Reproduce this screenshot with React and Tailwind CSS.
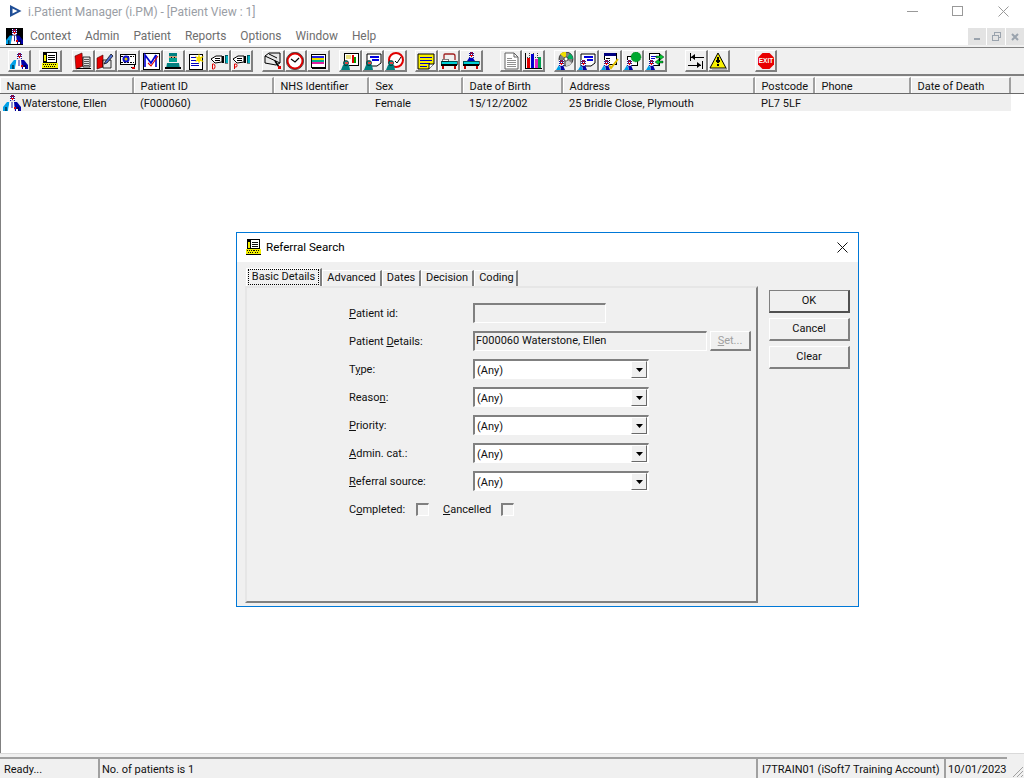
import React from "react";

const c = "[shape-rendering:crispEdges]";
const Svg = ({ children, s = 18 }) => (
  <svg width={s} height={s} viewBox="0 0 18 18" className="block">{children}</svg>
);
const Head = ({ x = 0, y = 0 }) => (
  <g transform={`translate(${x} ${y})`} className={c}>
    <rect x="0" y="0" width="5" height="6" fill="#1a1a9a" />
    <rect x="0" y="0" width="1" height="1" fill="#fff" /><rect x="2" y="0" width="1" height="1" fill="#e00000" /><rect x="4" y="0" width="1" height="1" fill="#fff" />
    <rect x="1" y="1" width="1" height="1" fill="#e00000" /><rect x="3" y="1" width="1" height="1" fill="#e00000" />
    <rect x="0" y="2" width="1" height="1" fill="#fff" /><rect x="2" y="2" width="1" height="1" fill="#fff" /><rect x="4" y="2" width="1" height="1" fill="#fff" />
    <rect x="1" y="3" width="3" height="1" fill="#e00000" />
    <rect x="0" y="4" width="5" height="1" fill="#fff" /><rect x="2" y="4" width="1" height="1" fill="#e00000" />
    <rect x="1" y="5" width="3" height="1" fill="#c8c8e8" />
  </g>
);
const Person = () => (
  <g>
    <path d="M0 17 L0 13 L4 8 L6.5 8 L5 17 Z" fill="#00a0e8" />
    <path d="M5 17 L6.5 8 L11 8 L12 17 Z" fill="#fff" />
    <path d="M11 8 L14 8 L18 13 L18 17 L12 17 Z" fill="#0000a8" />
    <path d="M8.5 8 L9.5 8 L9.5 14 L8.5 14 Z" fill="#1a1a9a" />
    <path d="M3 17 L3 13 M15 17 L15 13" stroke="#000" />
    <rect x="11" y="13" width="2" height="2" fill="#e00000" className={c} />
    <rect x="13" y="15" width="2" height="2" fill="#fff" className={c} />
    <Head x="6.5" y="1" />
  </g>
);
const SmallPerson = () => (
  <g>
    <path d="M0 18 L2 13 L8 13 L9 18 Z" fill="#008080" />
    <circle cx="5" cy="11" r="2.6" fill="#00807a" stroke="#000" strokeWidth="0.5" />
    <rect x="3.5" y="9.5" width="3" height="2.5" fill="#e04040" className={c} />
  </g>
);
const BluePerson = () => (
  <g>
    <path d="M0 18 L3 13 L5 18 Z" fill="#00a0e8" />
    <path d="M4 13 L7 13 L9 18 L5 18 Z" fill="#0000a8" />
    <Head x="3" y="8" />
  </g>
);

const referralArt = (
  <g>
    <rect x="2" y="0" width="14" height="12" fill="#000" className={c} />
    <rect x="6" y="1" width="9" height="9" fill="#fff" className={c} />
    <rect x="3" y="3" width="2" height="6" fill="#f4f000" className={c} />
    <path d="M7 3.5H14M7 5.5H14M7 7.5H14" stroke="#000" className={c} />
    <rect x="1" y="11" width="16" height="6" fill="#f4f000" className={c} />
    <rect x="1" y="16" width="16" height="1" fill="#000" className={c} />
    <path d="M2 12.5H16M3 14.5H15" stroke="#000" strokeDasharray="1 1" className={c} />
  </g>
);

const icons = {
  patient: <Svg><Person /></Svg>,
  referral: <Svg>{referralArt}</Svg>,
  book: (
    <Svg>
      <path d="M1 4 L8 1 L9 14 L2 17 Z" fill="#e80000" stroke="#400" strokeWidth="0.6" />
      <path d="M9 5 L16 5 L16 15 L9 15 Z" fill="#e0e0e0" stroke="#000" strokeWidth="0.8" />
      <path d="M10 7H15M10 9H15M10 11H15M10 13H15" stroke="#555" className={c} />
      <rect x="3" y="16" width="14" height="1" fill="#000" className={c} />
    </Svg>
  ),
  bookPen: (
    <Svg>
      <path d="M1 6 L7 3 L7 15 L1 17 Z" fill="#e80000" stroke="#400" strokeWidth="0.6" />
      <path d="M7 8 L15 8 L15 16 L7 16 Z" fill="#e6e6e6" stroke="#000" strokeWidth="0.8" />
      <path d="M9 10 L15 2 L17 4 L11 11 L8 12 Z" fill="#5070d0" stroke="#000" strokeWidth="0.7" />
    </Svg>
  ),
  globeDoc: (
    <Svg>
      <rect x="1" y="2" width="15" height="10" fill="#fff" stroke="#000" className={c} />
      <path d="M2 4H15M2 10H15" stroke="#000" strokeDasharray="2 1" className={c} />
      <circle cx="7" cy="7" r="3.5" fill="#1010d0" />
      <circle cx="7" cy="7" r="1.5" fill="#e0d000" />
      <path d="M11 12H15V15H12" fill="none" stroke="#000" className={c} />
      <rect x="13" y="15" width="3" height="2" fill="#e00000" className={c} />
    </Svg>
  ),
  mMail: (
    <Svg>
      <rect x="1" y="1" width="16" height="16" fill="#fff" stroke="#000" className={c} />
      <path d="M3 15 L3 3 L9 11 L14 3" fill="none" stroke="#0000d0" strokeWidth="1.6" />
      <path d="M14 3 L14 15" stroke="#0000d0" strokeWidth="1.6" />
      <path d="M6 11 L9 14 L16 4" fill="none" stroke="#e00000" strokeWidth="1.1" />
    </Svg>
  ),
  surgeon: (
    <Svg>
      <rect x="5" y="1" width="8" height="3" fill="#008080" className={c} />
      <rect x="5" y="4" width="8" height="3" fill="#c8a080" className={c} />
      <rect x="5" y="6" width="8" height="4" fill="#00a090" className={c} />
      <rect x="7" y="5" width="1" height="1" fill="#000" className={c} />
      <rect x="10" y="5" width="1" height="1" fill="#000" className={c} />
      <path d="M2 17 L3 11 L15 11 L16 17 Z" fill="#008080" />
      <rect x="1" y="15" width="16" height="2" fill="#000" className={c} />
    </Svg>
  ),
  star: (
    <Svg>
      <rect x="2" y="2" width="13" height="15" fill="#fff" stroke="#000" className={c} />
      <path d="M4 5H9M4 8H9M4 11H12M4 13H12" stroke="#0000c0" className={c} />
      <path d="M12 1 L13 5 L17 4 L14 7 L17 10 L13 9 L12 12 L11 9 L8 10 L10 7 L8 4 L11 5 Z" fill="#f8e000" />
    </Svg>
  ),
  handD: (
    <Svg>
      <path d="M1 7 L6 4 L12 4 L12 10 L5 11 Z" fill="#fff" stroke="#000" />
      <path d="M5 6H10M5 8H10" stroke="#000" className={c} />
      <rect x="12" y="4" width="2" height="7" fill="#000" className={c} />
      <rect x="15" y="3" width="3" height="8" fill="#00b0c0" stroke="#000" strokeWidth="0.5" className={c} />
      <path d="M2.5 12 V17 H3.5 Q5 17 5 14.5 Q5 12 3.5 12 Z" fill="none" stroke="#e00000" strokeWidth="1" />
    </Svg>
  ),
  handP: (
    <Svg>
      <path d="M1 7 L6 4 L12 4 L12 10 L5 11 Z" fill="#fff" stroke="#000" />
      <path d="M5 6H10M5 8H10" stroke="#000" className={c} />
      <rect x="12" y="4" width="2" height="7" fill="#000" className={c} />
      <rect x="15" y="3" width="3" height="8" fill="#00b0c0" stroke="#000" strokeWidth="0.5" className={c} />
      <path d="M2.5 17 V12 H4 Q5 12 5 13.5 Q5 15 4 15 H2.5" fill="none" stroke="#e00000" strokeWidth="1" />
    </Svg>
  ),
  envelope: (
    <Svg>
      <path d="M1 4 L5 1 L16 1 L16 11 L12 13 L1 11 Z" fill="#e8e8e8" stroke="#000" />
      <path d="M1 4 L16 11 M5 2 L13 6" stroke="#000" />
      <path d="M11 9 L15 15" stroke="#000" strokeWidth="1.5" />
      <rect x="14" y="14" width="3" height="3" fill="#e00000" className={c} />
    </Svg>
  ),
  clock: (
    <Svg>
      <circle cx="9" cy="9" r="7.5" fill="#fff" stroke="#e00000" strokeWidth="2" />
      <circle cx="9" cy="9" r="8.7" fill="none" stroke="#000" strokeWidth="0.6" />
      <path d="M5 7 L9 10 L13 6" fill="none" stroke="#000" strokeWidth="1.2" />
    </Svg>
  ),
  list: (
    <Svg>
      <rect x="2" y="2" width="14" height="13" fill="#fff" stroke="#000" className={c} />
      <rect x="3" y="4" width="12" height="2" fill="#2020e0" className={c} />
      <rect x="3" y="6" width="12" height="2" fill="#f0e000" className={c} />
      <rect x="3" y="8" width="12" height="2" fill="#00b090" className={c} />
      <rect x="3" y="10" width="12" height="2" fill="#e020a0" className={c} />
      <rect x="3" y="15" width="14" height="2" fill="#000" className={c} />
    </Svg>
  ),
  chartP: (
    <Svg>
      <rect x="3" y="1" width="14" height="12" fill="#fff" stroke="#000" className={c} />
      <rect x="11" y="3" width="2" height="8" fill="#e00000" className={c} />
      <rect x="13" y="5" width="2" height="6" fill="#00a000" className={c} />
      <rect x="5" y="3" width="5" height="4" fill="#e8e080" className={c} />
      <SmallPerson />
    </Svg>
  ),
  listP: (
    <Svg>
      <path d="M3 2 H17 V11 L13 14 H3 Z" fill="#fff" stroke="#000" />
      <path d="M6 5H15M8 8H15" stroke="#0000e0" strokeWidth="2" className={c} />
      <SmallPerson />
    </Svg>
  ),
  clockP: (
    <Svg>
      <circle cx="10" cy="8" r="7" fill="#fff" stroke="#e00000" strokeWidth="2" />
      <path d="M9 9 L11 11 L15 5" fill="none" stroke="#000" />
      <SmallPerson />
    </Svg>
  ),
  note: (
    <Svg>
      <path d="M1 2 H17 V12 L12 17 H1 Z" fill="#f8f000" stroke="#000" />
      <path d="M3 5H15M3 8H15M3 11H13M3 14H10" stroke="#0000c0" className={c} />
      <path d="M12 17 V12 H17" fill="#fff" stroke="#000" />
    </Svg>
  ),
  bed: (
    <Svg>
      <path d="M4 8 V3 Q4 2 5 2 H13 Q15 2 15 4 V8" fill="none" stroke="#a02020" strokeWidth="1.3" />
      <rect x="1" y="9" width="16" height="3" fill="#00d0d8" stroke="#000" strokeWidth="0.6" className={c} />
      <rect x="2" y="7" width="6" height="2" fill="#fff" stroke="#000" strokeWidth="0.5" className={c} />
      <rect x="1" y="12" width="16" height="2" fill="#000" className={c} />
      <rect x="2" y="14" width="2" height="3" fill="#c00000" className={c} />
      <rect x="14" y="14" width="2" height="3" fill="#c00000" className={c} />
    </Svg>
  ),
  bedP: (
    <Svg>
      <path d="M5 9 L9 3 L13 9 Z" fill="#0000c0" />
      <Head x="6.5" y="0" />
      <rect x="1" y="9" width="16" height="3" fill="#00d0d8" stroke="#000" strokeWidth="0.6" className={c} />
      <rect x="1" y="12" width="16" height="2" fill="#000" className={c} />
      <rect x="2" y="14" width="2" height="3" fill="#c00000" className={c} />
      <rect x="14" y="14" width="2" height="3" fill="#c00000" className={c} />
    </Svg>
  ),
  doc: (
    <Svg>
      <path d="M3 1 H12 L16 5 V17 H3 Z" fill="#fff" stroke="#606060" />
      <path d="M12 1 V5 H16" fill="none" stroke="#606060" />
      <path d="M5 6H10M5 8H14M5 10H14M5 12H14M5 14H14" stroke="#909090" className={c} />
    </Svg>
  ),
  bars: (
    <Svg>
      <path d="M1 5H17M1 9H17M5 1V16M9 1V16M13 1V16" stroke="#444" strokeDasharray="1 1" fill="none" className={c} />
      <path d="M1 1 V16 H18" stroke="#000" fill="none" className={c} />
      <rect x="3" y="6" width="3" height="10" fill="#e00000" className={c} />
      <rect x="7" y="2" width="3" height="14" fill="#0000d0" className={c} />
      <rect x="11" y="7" width="3" height="9" fill="#e020c0" className={c} />
      <rect x="14" y="5" width="3" height="11" fill="#00a050" className={c} />
    </Svg>
  ),
  cdP: (
    <Svg>
      <circle cx="10" cy="7" r="7" fill="#808080" stroke="#000" strokeWidth="0.7" />
      <path d="M10 7 L4 2 A7 7 0 0 1 10 0 Z" fill="#f0e000" />
      <path d="M10 7 L17 7 A7 7 0 0 0 14 1.5 Z" fill="#00b060" />
      <path d="M10 7 L16 11 A7 7 0 0 1 10 14 Z" fill="#d0d0d0" />
      <circle cx="10" cy="7" r="2" fill="#fff" stroke="#000" strokeWidth="0.6" />
      <BluePerson />
    </Svg>
  ),
  listB: (
    <Svg>
      <path d="M3 2 H17 V11 L13 14 H3 Z" fill="#fff" stroke="#000" />
      <path d="M6 5H15M9 8H15" stroke="#0000e0" strokeWidth="2" className={c} />
      <BluePerson />
    </Svg>
  ),
  calB: (
    <Svg>
      <rect x="3" y="1" width="12" height="11" fill="#fff" stroke="#000" className={c} />
      <rect x="3" y="1" width="12" height="3" fill="#000080" className={c} />
      <path d="M5 6H9M5 8H9M5 10H9" stroke="#000" className={c} />
      <path d="M8 13 L10 16 L17 7" fill="none" stroke="#e0c000" strokeWidth="2" />
      <BluePerson />
    </Svg>
  ),
  blobB: (
    <Svg>
      <rect x="3" y="4" width="10" height="9" fill="#fff" stroke="#000" className={c} />
      <circle cx="12" cy="5" r="5" fill="#00a830" stroke="#006000" strokeWidth="0.6" strokeDasharray="1 1" />
      <BluePerson />
    </Svg>
  ),
  arrowsB: (
    <Svg>
      <rect x="3" y="1" width="10" height="12" fill="#fff" stroke="#000" className={c} />
      <path d="M5 4H10M5 6H9" stroke="#0000d0" className={c} />
      <path d="M10 4 H14 V2 L18 5 L14 8 V6 H10 Z" fill="#00c830" stroke="#000" strokeWidth="0.4" />
      <path d="M17 9 H13 V7 L9 10 L13 13 V11 H17 Z" fill="#00c830" stroke="#000" strokeWidth="0.4" />
      <BluePerson />
    </Svg>
  ),
  swap: (
    <Svg>
      <path d="M3 1 V9 M15 9 V17" stroke="#000" className={c} />
      <path d="M4 5 H17 M1 13 H14" stroke="#000" className={c} />
      <path d="M4 5 L8 2 V8 Z M14 13 L10 10 V16 Z" fill="#000" />
    </Svg>
  ),
  warn: (
    <Svg>
      <path d="M9 1 L17 16 H1 Z" fill="#f8f000" stroke="#000" />
      <rect x="8" y="5" width="2" height="6" fill="#000" className={c} />
      <rect x="7" y="8" width="4" height="2" fill="#000" className={c} />
      <rect x="8" y="12" width="2" height="2" fill="#000" className={c} />
      <path d="M17 16 L18 17 H3" stroke="#808080" fill="none" />
    </Svg>
  ),
  exit: (
    <Svg>
      <path d="M5.5 1 H12.5 L17 5.5 V12.5 L12.5 17 H5.5 L1 12.5 V5.5 Z" fill="#e80000" />
      <text x="9" y="11" textAnchor="middle" fontSize="6.5" fontWeight="700" fill="#fff" fontFamily="Liberation Sans, sans-serif">EXIT</text>
    </Svg>
  ),
};

const groups = [
  { ml: "ml-[8px]", items: ["patient"] },
  { ml: "ml-[8.33px]", items: ["referral"] },
  { ml: "ml-[10.33px]", items: ["book", "bookPen", "globeDoc", "mMail", "surgeon", "star", "handD", "handP"] },
  { ml: "ml-[8.64px]", items: ["envelope", "clock", "list"] },
  { ml: "ml-[9.33px]", items: ["chartP", "listP", "clockP"] },
  { ml: "ml-[8px]", items: ["note", "bed", "bedP"] },
  { ml: "ml-[16.67px]", items: ["doc", "bars"] },
  { ml: "ml-[8.67px]", items: ["cdP", "listB", "calB", "blobB", "arrowsB"] },
  { ml: "ml-[18px]", items: ["swap", "warn"] },
  { ml: "ml-[24.5px]", items: ["exit"] },
];

const columns = [
  { label: "Name", w: "w-[134px]", value: "Waterstone, Ellen" },
  { label: "Patient ID", w: "w-[140px]", value: "(F000060)" },
  { label: "NHS Identifier", w: "w-[95px]", value: "" },
  { label: "Sex", w: "w-[94px]", value: "Female" },
  { label: "Date of Birth", w: "w-[100px]", value: "15/12/2002" },
  { label: "Address", w: "w-[192px]", value: "25 Bridle Close, Plymouth" },
  { label: "Postcode", w: "w-[60px]", value: "PL7 5LF" },
  { label: "Phone", w: "w-[96px]", value: "" },
  { label: "Date of Death", w: "w-[100px]", value: "" },
];

const menus = ["Context", "Admin", "Patient", "Reports", "Options", "Window", "Help"];

const Sel = ({ children }) => (
  <div className="w-[176px] h-[20px] bg-white border-t-2 border-l-2 border-t-[#808080] border-l-[#808080] border-r border-b border-r-white border-b-white flex items-center justify-between box-border">
    <span className="pl-[2px] leading-none pt-px">{children}</span>
    <span className="w-[16px] h-[17px] mr-[1px] bg-[#f0f0f0] border-r border-b border-r-[#696969] border-b-[#696969] border-t border-l border-t-white border-l-white flex items-center justify-center box-border">
      <svg width="7" height="4" viewBox="0 0 7 4"><path d="M0 0H7L3.5 4Z" fill="#000" /></svg>
    </span>
  </div>
);

const FormRow = ({ label, children }) => (
  <div className="flex items-center h-[20px]">
    <div className="w-[124px] pt-[2px]">{label}</div>
    {children}
  </div>
);

const DlgBtn = ({ children, def }) => (
  <div
    className={
      "w-[81px] h-[23px] flex items-center justify-center bg-[#f0f0f0] border-t border-l box-border border-r-2 border-b-2 " +
      (def ? "border-t-[#808080] border-l-[#808080] border-r-[#505050] border-b-[#505050]" : "border-t-white border-l-white border-r-[#808080] border-b-[#808080]")
    }
  >
    <span className="pt-px">{children}</span>
  </div>
);

const Tab = ({ w, children }) => (
  <div className={w + " h-[16px] mt-[2px] flex items-center justify-center border-t border-l border-t-white border-l-white border-r-2 border-r-[#808080] box-border"}>
    {children}
  </div>
);

const Status = ({ w, pad = "pl-[3px]", children }) => (
  <div className={w + " h-[21px] flex items-center border-t-2 border-l-2 border-t-[#a0a0a0] border-l-[#a0a0a0] box-border whitespace-nowrap " + pad}>
    <span className="pt-[3px]">{children}</span>
  </div>
);

export default function App() {
  return (
    <div className="relative w-[1024px] h-[778px] overflow-hidden bg-white flex flex-col text-[11px] text-[#111] font-['Roboto',sans-serif]">
      {/* Title bar */}
      <div className="h-[22px] flex items-center shrink-0">
        <svg width="14" height="14" viewBox="0 0 14 14" className="ml-[9px] -mt-[1px]">
          <path d="M1 1 L12.5 7 L1 13 Z M3.5 4.5 V9.5 L8.5 7 Z" fill="#1f4e96" fillRule="evenodd" />
        </svg>
        <span className="ml-[5px] pt-px text-[12px] text-[#9a9ea5]">
          i.Patient Manager (i.PM) - [Patient View : 1]
        </span>
        <div className="ml-auto flex items-center">
          <span className="w-[11px] h-px bg-[#999]" />
          <span className="ml-[34px] w-[11px] h-[10px] border border-[#999]" />
          <svg className="ml-[35px] mr-[15px]" width="11" height="11" viewBox="0 0 11 11"><path d="M0.5 0.5 L10.5 10.5 M10.5 0.5 L0.5 10.5" stroke="#999" /></svg>
        </div>
      </div>

      {/* Menu bar */}
      <div className="h-[23px] flex shrink-0 text-[11.9px] text-[#6e6e6e]">
        <div className="ml-[6px] mt-[6px]"><Svg s={17}><rect width="18" height="18" fill="#000" /><Person /></Svg></div>
        <div className="flex gap-[14px] ml-[7px] pt-[6px]">
          {menus.map((m) => <span key={m} className="leading-[16px]">{m}</span>)}
        </div>
        <div className="ml-auto mt-[6px] flex gap-px">
          {[0, 1, 2].map((i) => (
            <div key={i} className="w-[18px] h-[17px] bg-[#e3e3e3] flex items-center justify-center">
              {i === 0 && <span className="w-[6px] h-[2px] mt-[5px] bg-[#9aa3ad]" />}
              {i === 1 && (
                <svg width="9" height="9" viewBox="0 0 9 9" className={c}><path d="M2.5 2.5V0.5H8.5V5.5H6.5M0.5 3.5H6.5V8.5H0.5Z" fill="none" stroke="#9aa3ad" /></svg>
              )}
              {i === 2 && (
                <svg width="8" height="8" viewBox="0 0 8 8"><path d="M1 1L7 7M7 1L1 7" stroke="#9aa3ad" strokeWidth="2" /></svg>
              )}
            </div>
          ))}
        </div>
      </div>

      {/* Toolbar */}
      <div className="h-[31px] shrink-0 bg-[#f0f0f0] pt-[2px] box-border">
        <div className="h-[29px] border-t border-t-[#808080] border-b-2 border-b-[#808080] flex items-center box-border">
          {groups.map((g, i) => (
            <div key={i} className={"flex " + g.ml}>
              {g.items.map((k) => (
                <div key={k} className="w-[22.67px] h-[22px] flex items-center justify-center bg-[#f0f0f0] border-t border-l border-t-white border-l-white border-r-2 border-b-2 border-r-[#808080] border-b-[#808080] box-border">
                  {icons[k]}
                </div>
              ))}
            </div>
          ))}
        </div>
      </div>

      {/* Patient list */}
      <div className="flex-1 min-h-0 border-l border-l-[#808080] bg-white">
        <div className="h-[18px] bg-[#f0f0f0] pt-px box-border -ml-px flex border-b border-b-[#696969]">
          {columns.map((col) => (
            <div key={col.label} className={col.w + " h-[16px] pl-[5.5px] flex items-center border-t border-l border-t-white border-l-white border-r-2 border-r-[#a0a0a0] box-border shrink-0 whitespace-nowrap"}>
              <span className="pt-[3px]">{col.label}</span>
            </div>
          ))}
        </div>
        <div className="w-[1011px] -ml-px h-[17px] bg-[#efefef] flex items-center">
          {columns.map((col, i) => (
            <div key={col.label} className={col.w + " h-full shrink-0 flex items-center whitespace-nowrap " + (i === 0 ? "pl-[3px]" : "pl-[6px]")}>
              {i === 0 && <Svg s={18}><Person /></Svg>}
              <span className={i === 0 ? "ml-px pt-[3px]" : "pt-[3px]"}>{col.value}</span>
            </div>
          ))}
        </div>
      </div>

      {/* Status bar */}
      <div className="h-[25px] shrink-0 bg-[#f0f0f0] border-t border-t-[#d9d9d9] flex items-end box-border relative">
        <div className="w-[98px] h-[21px] flex items-center pl-[4px] border-t-2 border-t-[#a0a0a0] box-border"><span className="pt-[3px]">Ready...</span></div>
        <Status w="w-[658px]" pad="pl-[2px]">No. of patients is 1</Status>
        <Status w="w-[188px]" pad="pl-[4px]">I7TRAIN01 (iSoft7 Training Account)</Status>
        <Status w="w-[63px]" pad="pl-[2px]">10/01/2023</Status>
        <svg className="absolute right-0 bottom-0" width="14" height="14" viewBox="0 0 14 14">
          <path d="M13 3L3 13M13 7L7 13M13 11L11 13" stroke="#a0a0a0" fill="none" />
        </svg>
      </div>

      {/* Dialog */}
      <div className="absolute left-[236px] top-[232px] w-[623px] h-[375px] border border-[#0078d7] bg-[#f0f0f0] flex flex-col box-border">
        <div className="h-[29px] bg-white flex items-center shrink-0">
          <div className="ml-[8px]"><Svg s={17}>{referralArt}</Svg></div>
          <span className="ml-[4px] text-[11.6px] text-black">Referral Search</span>
          <svg className="ml-auto mr-[10px]" width="11" height="11" viewBox="0 0 11 11"><path d="M0.5 0.5 L10.5 10.5 M10.5 0.5 L0.5 10.5" stroke="#111" /></svg>
        </div>
        <div className="flex pl-[8px] pt-[6px]">
          <div className="w-[513px]">
            <div className="flex h-[18px] pl-px">
              <div className="w-[76px] h-[18px] flex items-center justify-center border-t border-l border-t-white border-l-white border-r-2 border-r-[#808080] box-border">
                <span className="w-[71px] text-center h-[16px] -mt-px leading-[13px] border border-dotted border-black whitespace-nowrap">Basic Details</span>
              </div>
              <Tab w="w-[60px]">Advanced</Tab>
              <Tab w="w-[39px]">Dates</Tab>
              <Tab w="w-[53px]">Decision</Tab>
              <Tab w="w-[44px]"><span className="pl-[2px]">Coding</span></Tab>
            </div>
            <div className="h-[317px] border-t-2 border-l-2 border-t-[#e6e6e6] border-l-[#e6e6e6] border-r-2 border-b-2 border-r-[#808080] border-b-[#808080] box-border pl-[102px] pt-[15px] flex flex-col gap-[8px]">
              <FormRow label={<span><u>P</u>atient id:</span>}>
                <div className="w-[133px] h-[20px] border-t-2 border-l-2 border-t-[#808080] border-l-[#808080] border-r border-b border-r-white border-b-white box-border" />
              </FormRow>
              <FormRow label={<span>Patient <u>D</u>etails:</span>}>
                <div className="w-[234px] h-[20px] border-t-2 border-l-2 border-t-[#808080] border-l-[#808080] border-r border-b border-r-white border-b-white box-border flex items-center pl-[1px]">F000060 Waterstone, Ellen</div>
                <div className="ml-[3px] w-[41px] h-[20px] flex items-center justify-center text-[#a0a0a0] border-t border-l border-t-white border-l-white border-r-2 border-b-2 border-r-[#808080] border-b-[#808080] box-border"><span className="pt-px"><u>S</u>et...</span></div>
              </FormRow>
              <FormRow label={<span>T<u>y</u>pe:</span>}><Sel>(Any)</Sel></FormRow>
              <FormRow label={<span>Reaso<u>n</u>:</span>}><Sel>(Any)</Sel></FormRow>
              <FormRow label={<span><u>P</u>riority:</span>}><Sel>(Any)</Sel></FormRow>
              <FormRow label={<span><u>A</u>dmin. cat.:</span>}><Sel>(Any)</Sel></FormRow>
              <FormRow label={<span><u>R</u>eferral source:</span>}><Sel>(Any)</Sel></FormRow>
              <div className="flex items-center h-[20px]">
                <span className="w-[67px] pt-[2px]">C<u>o</u>mpleted:</span>
                <span className="w-[13px] h-[13px] bg-[#f4f4f4] border-t-2 border-l-2 border-t-[#808080] border-l-[#808080] border-r border-b border-r-white border-b-white box-border" />
                <span className="ml-[14px] w-[58px] pt-[2px]"><u>C</u>ancelled</span>
                <span className="w-[13px] h-[13px] bg-[#f4f4f4] border-t-2 border-l-2 border-t-[#808080] border-l-[#808080] border-r border-b border-r-white border-b-white box-border" />
              </div>
            </div>
          </div>
          <div className="ml-[11px] pt-[22px] flex flex-col gap-[5px]">
            <DlgBtn def>OK</DlgBtn>
            <DlgBtn>Cancel</DlgBtn>
            <DlgBtn>Clear</DlgBtn>
          </div>
        </div>
      </div>
    </div>
  );
}
